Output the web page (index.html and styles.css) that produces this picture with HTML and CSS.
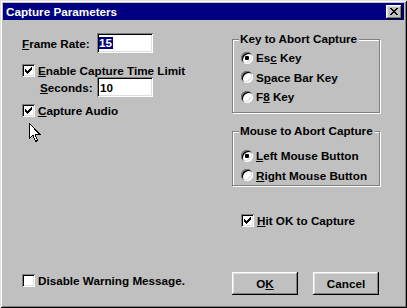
FILE: index.html
```html
<!DOCTYPE html>
<html>
<head>
<meta charset="utf-8">
<link rel="stylesheet" href="styles.css">
</head>
<body>
<div class="window">
  <div class="titlebar">
    <span class="title">Capture Parameters</span>
    <span class="close"><svg width="16" height="14" viewBox="0 0 16 14" shape-rendering="crispEdges"><path fill="#000" d="M4 3h2v1h-2z M10 3h2v1h-2z M5 4h2v1h-2z M9 4h2v1h-2z M6 5h4v1h-4z M7 6h2v1h-2z M6 7h4v1h-4z M5 8h2v1h-2z M9 8h2v1h-2z M4 9h2v1h-2z M10 9h2v1h-2z"/></svg></span>
  </div>
  <div class="body">
    <div class="left">
      <div class="field frame">
        <span class="lbl"><u>F</u>rame Rate:</span>
        <span class="edit"><span class="sel">15</span></span>
      </div>
      <div class="check enable">
        <span class="box"><svg width="13" height="13" viewBox="0 0 13 13" shape-rendering="crispEdges"><path fill="#000" d="M3 5h1v3h-1z M4 6h1v3h-1z M5 7h1v3h-1z M6 6h1v3h-1z M7 5h1v3h-1z M8 4h1v3h-1z M9 3h1v3h-1z"/></svg></span>
        <span class="txt"><u>E</u>nable Capture Time Limit</span>
      </div>
      <div class="field seconds">
        <span class="lbl"><u>S</u>econds:</span>
        <span class="edit">10</span>
      </div>
      <div class="check audio">
        <span class="box"><svg width="13" height="13" viewBox="0 0 13 13" shape-rendering="crispEdges"><path fill="#000" d="M3 5h1v3h-1z M4 6h1v3h-1z M5 7h1v3h-1z M6 6h1v3h-1z M7 5h1v3h-1z M8 4h1v3h-1z M9 3h1v3h-1z"/></svg></span>
        <span class="txt"><u>C</u>apture Audio</span>
      </div>
      <div class="check disable">
        <span class="box"></span>
        <span class="txt">Disable Warning Message.</span>
      </div>
    </div>
    <div class="right">
      <div class="group g1">
        <div class="legend">Key to Abort Capture</div>
        <div class="radios">
          <div class="radio"><span class="dot on"></span><span class="txt">Es<u>c</u> Key</span></div>
          <div class="radio"><span class="dot"></span><span class="txt">S<u>p</u>ace Bar Key</span></div>
          <div class="radio"><span class="dot"></span><span class="txt">F<u>8</u> Key</span></div>
        </div>
      </div>
      <div class="group g2">
        <div class="legend">Mouse to Abort Capture</div>
        <div class="radios">
          <div class="radio"><span class="dot on"></span><span class="txt"><u>L</u>eft Mouse Button</span></div>
          <div class="radio"><span class="dot"></span><span class="txt"><u>R</u>ight Mouse Button</span></div>
        </div>
      </div>
      <div class="check hitok">
        <span class="box"><svg width="13" height="13" viewBox="0 0 13 13" shape-rendering="crispEdges"><path fill="#000" d="M3 5h1v3h-1z M4 6h1v3h-1z M5 7h1v3h-1z M6 6h1v3h-1z M7 5h1v3h-1z M8 4h1v3h-1z M9 3h1v3h-1z"/></svg></span>
        <span class="txt"><u>H</u>it OK to Capture</span>
      </div>
      <div class="buttons">
        <div class="btn">O<u>K</u></div>
        <div class="btn">Cancel</div>
      </div>
    </div>
  </div>
  <svg class="cursor" width="12" height="20" viewBox="0 0 12 20" shape-rendering="crispEdges"><path d="M0.5 0.5 L0.5 15.5 L4 12 L6.5 18.5 L8.5 17.5 L6 11 L10.5 11 Z" fill="#fff" stroke="#000" stroke-width="1"/></svg>
</div>
</body>
</html>
```

FILE: styles.css
```css
* { box-sizing: border-box; }
html, body { margin: 0; padding: 0; background: #c0c0c0; }
body {
  font-family: "Liberation Sans", Arial, sans-serif;
  font-size: 11.7px;
  font-weight: bold;
  color: #000;
}
u { text-decoration: underline; text-underline-offset: 1px; }

.window {
  position: relative;
  width: 407px;
  height: 308px;
  padding: 3px;
  background: #c0c0c0;
  box-shadow: inset 1px 1px #dfdfdf, inset -1px -1px #000, inset 2px 2px #fff, inset -2px -2px #808080;
  display: flex;
  flex-direction: column;
}

.titlebar {
  height: 17px;
  background: #000080;
  color: #fff;
  display: flex;
  align-items: center;
  justify-content: space-between;
  padding: 0 2px 0 3px;
}
.title { line-height: 17px; }
.close {
  width: 16px;
  height: 14px;
  background: #c0c0c0;
  box-shadow: inset -1px -1px #000, inset 1px 1px #fff, inset -2px -2px #808080, inset 2px 2px #dfdfdf;
  display: flex;
}

.body {
  display: flex;
  padding-left: 19px;
}
.left {
  width: 210px;
  display: flex;
  flex-direction: column;
}
.right {
  width: 148px;
  display: flex;
  flex-direction: column;
}

.field { display: flex; align-items: center; height: 20px; }
.frame { margin-top: 13px; }
.frame .lbl { width: 75px; }
.seconds .lbl { margin-left: 18px; width: 57px; }
.edit {
  width: 56px;
  height: 20px;
  background: #fff;
  box-shadow: inset 1px 1px #808080, inset -1px -1px #fff, inset 2px 2px #000, inset -2px -2px #dfdfdf;
  padding: 0 0 0 3px;
  display: flex;
  align-items: center;
  line-height: 13px;
}
.sel { background: #000080; color: #fff; padding: 0 1px 0 0; margin-left: -1px; line-height: 12px; }

.check { display: flex; align-items: center; height: 13px; line-height: 13px; }
.box {
  width: 13px;
  height: 13px;
  flex: none;
  background: #fff;
  box-shadow: inset 1px 1px #808080, inset -1px -1px #fff, inset 2px 2px #000, inset -2px -2px #dfdfdf;
  display: flex;
}
.check .txt { margin-left: 3px; white-space: nowrap; }
.enable { margin-top: 11px; }
.seconds { margin-top: 0; }
.audio { margin-top: 7px; }
.disable { margin-top: 157px; }

.group {
  border: 1px solid #808080;
  box-shadow: inset 1px 1px #fff, 1px 1px #fff;
  display: flex;
  flex-direction: column;
}
.g1 { margin-top: 19px; height: 74px; }
.g2 { margin-top: 18px; height: 55px; }
.legend {
  margin-top: -8px;
  margin-left: 6px;
  padding: 0 2px 0 1px;
  background: #c0c0c0;
  line-height: 14px;
  height: 14px;
  align-self: flex-start;
  white-space: nowrap;
}
.g1 .radios { margin-top: 2px; }
.g2 .radios { margin-top: 8px; }
.radio {
  height: 19.5px;
  display: flex;
  align-items: center;
  padding-left: 8px;
}
.radio .txt { margin-left: 3px; white-space: nowrap; }
.dot {
  width: 12px;
  height: 12px;
  flex: none;
  border-radius: 50%;
  background: #fff;
  box-shadow: inset 1px 1px #808080, inset -1px -1px #fff, inset 2px 2px #000, inset -2px -2px #dfdfdf;
  display: flex;
  align-items: center;
  justify-content: center;
}
.dot.on::after {
  content: "";
  width: 4px;
  height: 4px;
  border-radius: 1px;
  background: #000;
}

.hitok { margin-top: 28px; margin-left: 9px; }

.buttons {
  margin-top: 45px;
  display: flex;
  gap: 15px;
}
.btn {
  width: 66px;
  height: 23px;
  background: #c0c0c0;
  box-shadow: inset -1px -1px #000, inset 1px 1px #fff, inset -2px -2px #808080, inset 2px 2px #dfdfdf;
  display: flex;
  align-items: center;
  justify-content: center;
}

.cursor {
  position: absolute;
  left: 29px;
  top: 123px;
}
```
